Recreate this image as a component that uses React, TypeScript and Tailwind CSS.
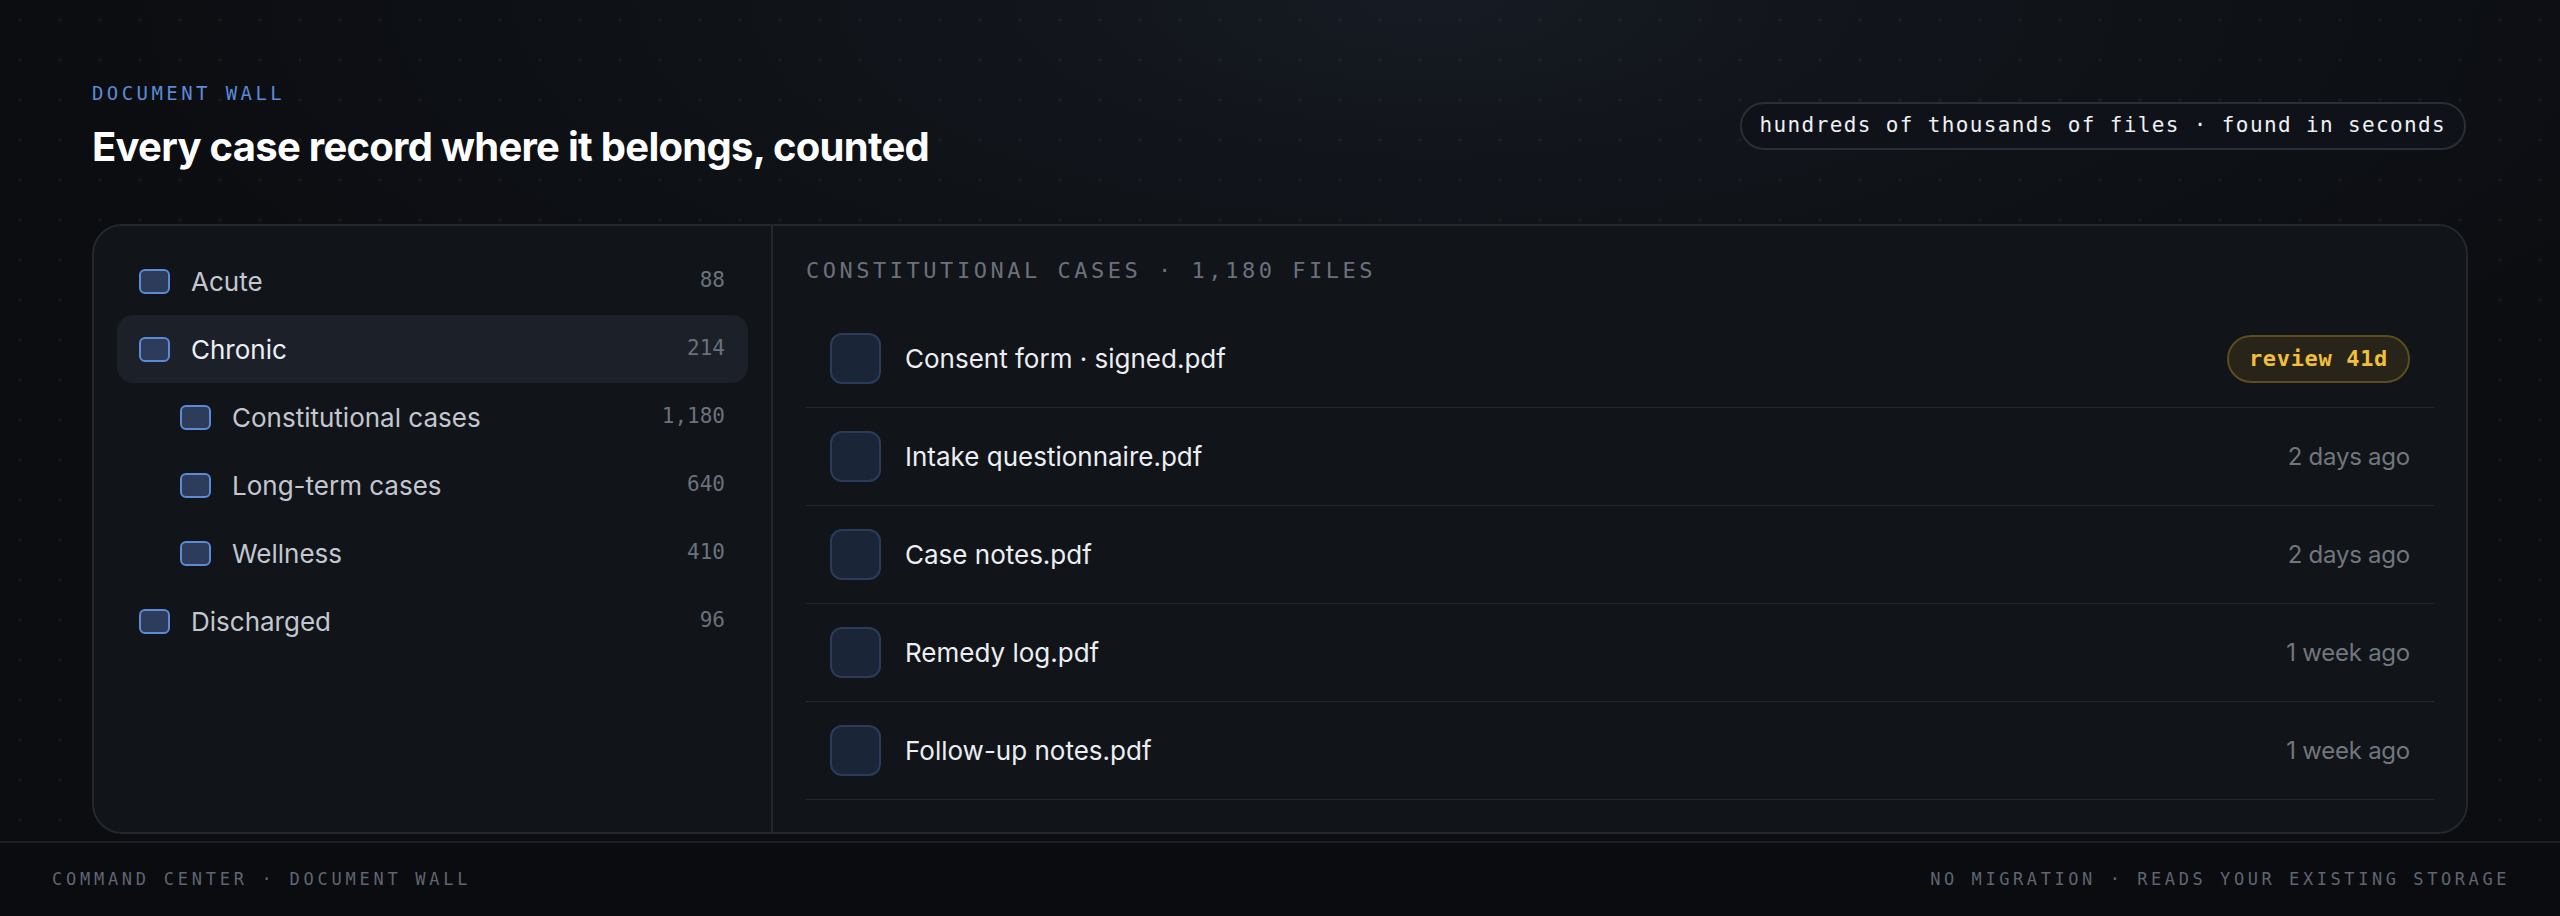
import React from "react";

const sans = "font-['Inter','Noto_Sans',sans-serif]";
const mono = "font-['DejaVu_Sans_Mono','Liberation_Mono',monospace]";

type Folder = { name: string; count: string; depth: number; active?: boolean };

const folders: Folder[] = [
  { name: "Acute", count: "88", depth: 0 },
  { name: "Chronic", count: "214", depth: 0, active: true },
  { name: "Constitutional cases", count: "1,180", depth: 1 },
  { name: "Long-term cases", count: "640", depth: 1 },
  { name: "Wellness", count: "410", depth: 1 },
  { name: "Discharged", count: "96", depth: 0 },
];

type FileRow = { name: string; when?: string; review?: string };

const files: FileRow[] = [
  { name: "Consent form · signed.pdf", review: "review 41d" },
  { name: "Intake questionnaire.pdf", when: "2 days ago" },
  { name: "Case notes.pdf", when: "2 days ago" },
  { name: "Remedy log.pdf", when: "1 week ago" },
  { name: "Follow-up notes.pdf", when: "1 week ago" },
];

function Checkbox() {
  return (
    <span className="block w-[31px] h-[25px] shrink-0 rounded-[6px] border-2 border-[#5b8ad6] bg-[#2c3c5a]" />
  );
}

function FolderItem({ f }: { f: Folder }) {
  return (
    <li
      className={`flex items-center h-[68px] pr-[23px] rounded-[16px] ${
        f.depth ? "pl-[63px]" : "pl-[22px]"
      } ${f.active ? "bg-[#1b2029]" : ""}`}
    >
      <Checkbox />
      <span
        className={`ml-[21px] flex-1 text-[26px] ${sans} ${
          f.active ? "text-[#eef0f3]" : "text-[#c3c7cf]"
        }`}
      >
        {f.name}
      </span>
      <span className={`${mono} text-[21px] text-[#6b717c]`}>{f.count}</span>
    </li>
  );
}

function FileItem({ f }: { f: FileRow }) {
  return (
    <li className="flex items-center h-[98px] px-[24px] border-b border-[#23262d]">
      <span className="block w-[51px] h-[51px] shrink-0 rounded-[12px] border-2 border-[#2b3c5a] bg-[#1b2538]" />
      <span className={`ml-[24px] flex-1 text-[26px] text-[#eceef2] ${sans}`}>
        {f.name}
      </span>
      {f.review ? (
        <span
          className={`${mono} flex items-center h-[48px] px-[20px] rounded-full border-2 border-[#5c4d1f] bg-[#28241a] text-[22px] tracking-[0.03em] font-bold text-[#f2bf3c]`}
        >
          {f.review}
        </span>
      ) : (
        <span className={`${sans} text-[24px] tracking-[-0.01em] text-[#72767f]`}>
          {f.when}
        </span>
      )}
    </li>
  );
}

export default function App() {
  return (
    <div className="h-screen w-full flex flex-col overflow-hidden bg-[#0b0d11] bg-[radial-gradient(ellipse_1400px_520px_at_56%_0%,#161a22_0%,#0f1217_50%,#0b0d11_100%)]">
      <div className="flex-1 min-h-0 flex flex-col px-[92px] pt-[81px] pb-[7px] bg-[radial-gradient(circle,rgba(255,255,255,0.045)_1.5px,transparent_1.8px)] bg-[length:40px_40px]">
        <header className="flex items-center justify-between">
          <div>
            <p className={`${mono} text-[19px] leading-[24px] tracking-[0.18em] text-[#5b8ad6]`}>
              DOCUMENT WALL
            </p>
            <h1
              className={`${sans} mt-[18px] text-[40px] leading-[48px] font-bold tracking-[-0.018em] text-white`}
            >
              Every case record where it belongs, counted
            </h1>
          </div>
          <span
            className={`${mono} mr-[2px] flex items-center h-[48px] px-[18px] rounded-full border-2 border-[#2a2e36] bg-[#0f1218] text-[21px] tracking-[0.065em] text-[#eef0f3]`}
          >
            hundreds of thousands of files · found in seconds
          </span>
        </header>

        <section className="mt-[53px] flex-1 min-h-0 flex rounded-[30px] border-2 border-[#24272e] bg-[#111419] overflow-hidden">
          <aside className="w-[679px] shrink-0 border-r-2 border-[#24272e] px-[23px] pt-[21px]">
            <ul>
              {folders.map((f) => (
                <FolderItem key={f.name} f={f} />
              ))}
            </ul>
          </aside>
          <div className="flex-1 pl-[33px] pr-[32px] pt-[31px]">
            <p className={`${mono} text-[22px] leading-[28px] tracking-[0.16em] text-[#6b717c]`}>
              CONSTITUTIONAL CASES · 1,180 FILES
            </p>
            <ul className="mt-[25px]">
              {files.map((f) => (
                <FileItem key={f.name} f={f} />
              ))}
            </ul>
          </div>
        </section>
      </div>

      <footer className="h-[75px] shrink-0 flex items-center justify-between border-t-2 border-[#1c1f25] bg-[#0a0c10] pl-[52px] pr-[50px]">
        <span className={`${mono} text-[17px] tracking-[0.22em] text-[#5f6571]`}>
          COMMAND CENTER · DOCUMENT WALL
        </span>
        <span className={`${mono} text-[17px] tracking-[0.21em] text-[#5f6571]`}>
          NO MIGRATION · READS YOUR EXISTING STORAGE
        </span>
      </footer>
    </div>
  );
}
